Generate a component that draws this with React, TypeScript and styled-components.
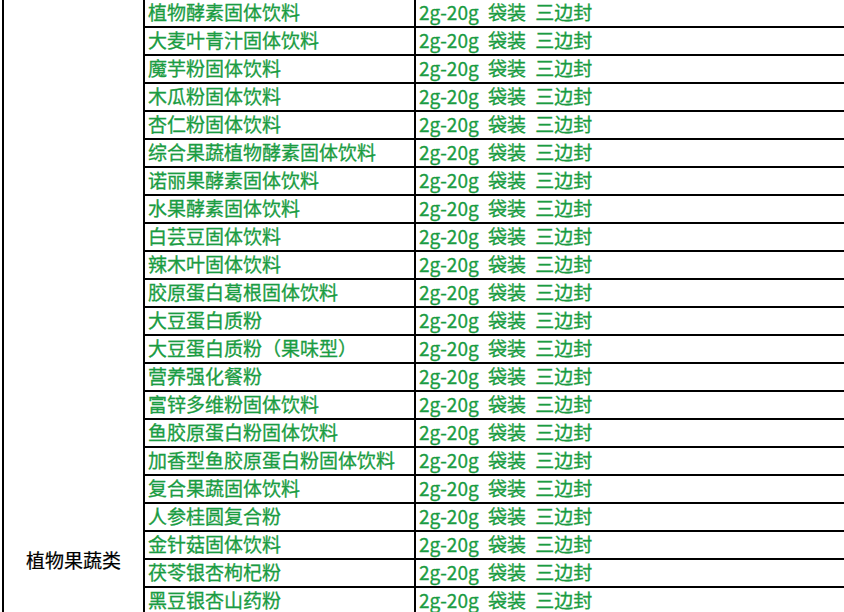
import styled, { createGlobalStyle } from "styled-components"

const products = [
  "植物酵素固体饮料",
  "大麦叶青汁固体饮料",
  "魔芋粉固体饮料",
  "木瓜粉固体饮料",
  "杏仁粉固体饮料",
  "综合果蔬植物酵素固体饮料",
  "诺丽果酵素固体饮料",
  "水果酵素固体饮料",
  "白芸豆固体饮料",
  "辣木叶固体饮料",
  "胶原蛋白葛根固体饮料",
  "大豆蛋白质粉",
  "大豆蛋白质粉（果味型）",
  "营养强化餐粉",
  "富锌多维粉固体饮料",
  "鱼胶原蛋白粉固体饮料",
  "加香型鱼胶原蛋白粉固体饮料",
  "复合果蔬固体饮料",
  "人参桂圆复合粉",
  "金针菇固体饮料",
  "茯苓银杏枸杞粉",
  "黑豆银杏山药粉",
]

const spec = "2g-20g 袋装 三边封"

const App = () => {
  return (
    <>
      <GlobalStyle />
      <Page>
        <Table>
          <CategoryCell style={{ gridRow: `1 / span ${products.length}` }}>
            植物果蔬类
          </CategoryCell>
          {products.map((name) => (
            <Row key={name}>
              <Cell>{name}</Cell>
              <Cell $spaced>{spec}</Cell>
            </Row>
          ))}
        </Table>
      </Page>
    </>
  )
}

const GlobalStyle = createGlobalStyle`
  html, body {
    margin: 0;
    padding: 0;
    background: #ffffff;
    overflow: hidden;
  }
`

const Page = styled.div`
  width: 844px;
  height: 612px;
  overflow: hidden;
  padding-left: 2px;
  box-sizing: border-box;
  font-family: "Noto Sans CJK SC", "Noto Sans", sans-serif;
  font-size: 19px;
`

const Table = styled.div`
  display: grid;
  grid-template-columns: 141px 271px 480px;
  grid-auto-rows: 28px;
  width: max-content;
  border-left: 2px solid #000000;
`

const CategoryCell = styled.div`
  grid-column: 1;
  display: flex;
  align-items: flex-end;
  justify-content: center;
  padding-bottom: 41px;
  box-sizing: border-box;
  border-right: 2px solid #000000;
  border-bottom: 2px solid #000000;
  color: #000000;
  line-height: 26px;
  -webkit-text-stroke: 0.2px #000000;
`

const Row = styled.div`
  display: contents;
`

const Cell = styled.div<{ $spaced?: boolean }>`
  box-sizing: border-box;
  height: 28px;
  padding: 0 0 2px 3px;
  line-height: 24px;
  white-space: nowrap;
  color: #1a9c42;
  -webkit-text-stroke: 0.3px #1a9c42;
  border-right: 2px solid #000000;
  border-bottom: 2px solid #000000;
  word-spacing: ${(p) => (p.$spaced ? "5px" : "0")};
`

export default App
